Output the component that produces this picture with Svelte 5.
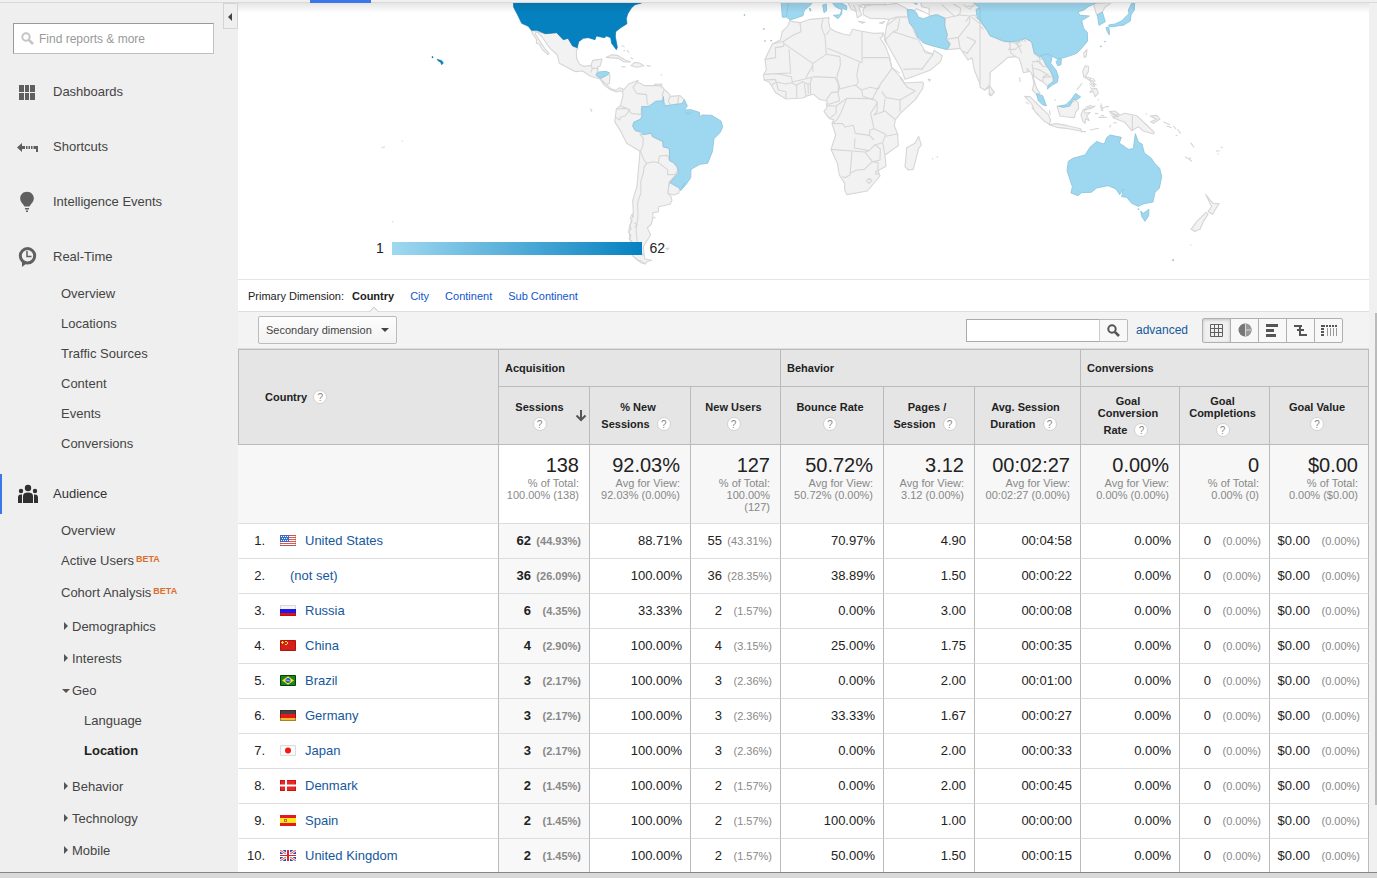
<script>
  const top = [
    { icon: 'dash', label: 'Dashboards' },
    { icon: 'short', label: 'Shortcuts' },
    { icon: 'bulb', label: 'Intelligence Events' },
    { icon: 'clock', label: 'Real-Time' }
  ];
  const realTime = ['Overview', 'Locations', 'Traffic Sources', 'Content', 'Events', 'Conversions'];
  const tabs = ['Country', 'City', 'Continent', 'Sub Continent'];
  const columns = [
    { lines: ['Sessions', ''], sort: true, total: '138', sub: ['% of Total:', '100.00% (138)'] },
    { lines: ['% New', 'Sessions'], total: '92.03%', sub: ['Avg for View:', '92.03% (0.00%)'] },
    { lines: ['New Users', ''], total: '127', sub: ['% of Total:', '100.00%', '(127)'] },
    { lines: ['Bounce Rate', ''], total: '50.72%', sub: ['Avg for View:', '50.72% (0.00%)'] },
    { lines: ['Pages /', 'Session'], total: '3.12', sub: ['Avg for View:', '3.12 (0.00%)'] },
    { lines: ['Avg. Session', 'Duration'], total: '00:02:27', sub: ['Avg for View:', '00:02:27 (0.00%)'] },
    { lines: ['Goal', 'Conversion', 'Rate'], total: '0.00%', sub: ['Avg for View:', '0.00% (0.00%)'] },
    { lines: ['Goal', 'Completions', ''], total: '0', sub: ['% of Total:', '0.00% (0)'] },
    { lines: ['Goal Value', ''], total: '$0.00', sub: ['% of Total:', '0.00% ($0.00)'] }
  ];
  const rows = [
    ['us', 'United States', '62', '44.93%', '88.71%', '55', '43.31%', '70.97%', '4.90', '00:04:58'],
    ['', '(not set)', '36', '26.09%', '100.00%', '36', '28.35%', '38.89%', '1.50', '00:00:22'],
    ['ru', 'Russia', '6', '4.35%', '33.33%', '2', '1.57%', '0.00%', '3.00', '00:00:08'],
    ['cn', 'China', '4', '2.90%', '100.00%', '4', '3.15%', '25.00%', '1.75', '00:00:35'],
    ['br', 'Brazil', '3', '2.17%', '100.00%', '3', '2.36%', '0.00%', '2.00', '00:01:00'],
    ['de', 'Germany', '3', '2.17%', '100.00%', '3', '2.36%', '33.33%', '1.67', '00:00:27'],
    ['jp', 'Japan', '3', '2.17%', '100.00%', '3', '2.36%', '0.00%', '2.00', '00:00:33'],
    ['dk', 'Denmark', '2', '1.45%', '100.00%', '2', '1.57%', '0.00%', '2.00', '00:00:45'],
    ['es', 'Spain', '2', '1.45%', '100.00%', '2', '1.57%', '100.00%', '1.00', '00:00:00'],
    ['gb', 'United Kingdom', '2', '1.45%', '100.00%', '2', '1.57%', '50.00%', '1.50', '00:00:15']
  ];

  // Land outlines, three drawing units to one pixel of the map.
  const americas = {
    land: [
      'M484 91L526 101 560 98 580 119 594 115 608 138 624 145 619 150 620 176 629 193 641 199 663 196 668 181 696 177 690 199 683 201 684 211 678 225 690 236 709 253 722 266 738 271 748 263 758 266 759 276 750 272 739 276 720 268 703 256 690 237 660 228 638 213 616 215 568 190 562 165 540 145 516 111 500 94 496 102 510 124 524 145 537 160 534 164 518 150 507 132 499 130 500 119 488 102Z',
      'M690 236L717 223 720 227 718 251 709 253Z',
      'M763 267L776 252 805 241 800 247 810 250 824 257 873 257 883 268 896 280 901 289 930 287 943 299 937 311 910 314 890 318 877 303 857 304 836 320 815 320 816 350 811 358 790 370 789 380 797 392 810 396 811 404 845 400 847 410 878 425 880 441 898 445 899 480 911 489 922 502 923 518 897 547 894 578 903 590 906 601 900 613 866 620 865 636 848 638 849 651 844 672 832 684 842 704 820 740 822 760 824 776 845 781 830 785 826 792 812 788 788 768 781 724 777 690 790 640 788 602 801 558 806 500 810 454 770 430 753 395 734 365 736 352 739 327 751 317 759 287 758 270Z',
      'M709 172L726 164 744 167 764 179 782 186 762 186 744 175Z',
      'M783 197L794 187 808 189 822 197 800 202Z',
      'M899 548L929 565 926 580 911 585 893 580Z'
    ],
    lines: [
      'M751 317L780 330 776 332 785 340 813 344 815 320M739 327L770 325 778 332 765 348 752 351 750 360 736 352',
      'M800 247L789 262 800 280 830 284 831 305 836 320M883 268L877 285 881 295M901 289L895 302 901 315M926 290L923 312',
      'M811 404L820 415 818 440 811 454 822 480 830 490M830 490L850 485 865 488 868 468 893 466 898 480M865 488L893 509 893 524 915 523 922 514',
      'M830 490L822 502 820 520 812 545 813 578 803 607 804 650 798 690 801 720 809 745 820 768M663 196L667 205 662 218M668 205L683 205 684 211',
      'M755 137L764 140M770 150L777 158M782 172L789 178M760 153L765 151M830 197L842 199M755 200L767 201M852 253L875 252 874 262M660 326L666 331 662 335M35 443L45 440M95 422l4 2M66 664l4 3M886 746L897 744 890 751M786 645L792 650M848 655L857 652',
      'M788 640l-7 14 5 10-8 14 6 8-9 10 8 10-6 10 10 10M792 668l10 6-8 8M793 772l10 8 12 4 10 8M872 224l5 1'
    ],
    light: [
      'M678 225L685 216 708 214 719 219 706 228 692 235Z',
      'M815 320L836 320 857 304 877 303 880 290 883 318 910 314 937 311 943 299 952 318 943 330 962 329 988 337 990 350 997 345 1025 346 1053 363 1058 380 1051 397 1032 416 1027 455 1013 490 990 493 963 508 962 533 947 555 932 572 929 564 900 547 926 518 922 502 911 487 899 483 898 445 880 441 878 424 847 409 844 399 820 404 810 394 796 392 788 378 792 366 811 358 816 350Z',
      'M945 338l12 4 8-6M945 548l-10 16'
    ],
    dark: [
      'M430 0L431 22 443 45 455 70 475 79 484 91 501 91 526 101 560 98 580 119 594 115 608 138 622 143 626 125 640 115 655 113 675 119 679 108 703 113 710 108 722 113 725 130 739 149 742 142 736 110 737 95 751 84 771 71 769 56 773 42 784 24 795 14 815 9 820 0Z',
      'M202 178L208 180 215 182 220 189 215 194 212 187 204 182ZM186 170h3v3h-3Z'
    ]
  };
  const africa = {
    land: [
      'M149 61L157 65 180 68 210 58 267 53 266 65 270 85 285 94 308 102 330 106 337 88 366 94 400 100 430 99 427 111 420 114 435 136 449 172 455 202 473 222 488 238 492 249 545 246 551 250 547 267 526 299 484 337 466 359 463 378 473 402 475 437 435 465 438 499 414 512 420 528 382 573 321 584 314 570 314 550 298 525 292 490 273 448 287 405 276 370 281 359 268 356 252 334 260 324 261 303 238 298 221 283 202 287 189 294 138 297 107 278 88 247 73 240 70 225 79 210 75 178 97 132 121 120 127 94 145 77Z',
      'M536 409L544 435 536 445 520 508 505 510 495 500 498 470 500 443 525 430Z',
      'M440 77L448 55 475 50 502 51 515 77 530 110 548 141 556 158 579 163 582 151 607 167 602 184 570 211 510 233 495 238 485 210 460 165 440 130 433 119 437 94Z',
      'M369 29L379 17 410 12 440 14 470 10 501 26 503 50 470 51 448 58 430 56 390 55 370 44Z',
      'M320 0L334 28 348 34 352 53 365 45 357 25 365 14 435 14 435 0Z',
      'M540 0L545 20 567 25 568 48 595 44 615 55 616 82 622 108 620 118 631 130 624 149 661 145 684 180 696 173 703 210 724 262 735 270 746 263 751 214 790 184 790 0Z',
      'M747 284L751 261 763 277 753 287Z',
      'M565 237l7 2-4 4ZM355 64l20 3-8 3ZM418 69l16-5-7 7Z'
    ],
    lines: [
      'M180 68L183 95 159 106 131 124 97 132M131 124V139L106 143 107 173 75 178M131 130L218 190 219 215M147 148L152 219 112 221M219 190L259 163 300 170M259 163L255 110 244 80 249 55',
      'M258 105L270 90M366 94V188L300 160 262 145M366 172L448 173M300 170L301 195 290 232M358 188L350 225 355 247 345 258',
      'M73 223L112 221 154 230 157 246 198 236 222 230 286 233 294 250 295 275 274 278 259 300M70 240L105 238 109 246 138 252 154 248 168 256 188 245 202 252 213 250M95 255L109 246 115 270 138 275 138 297M170 252V293M193 252L198 288M204 252L205 283M215 234L211 250 212 284',
      'M218 197L202 225 198 236M290 232L299 260 294 280 299 302 270 312 257 312M260 317L289 318 288 340 268 356M288 318L320 295 398 296 412 268 425 247 456 205M299 267L345 255 365 270 390 262 415 267 425 245M365 270L368 288 400 300',
      'M320 295L303 338 291 359 278 370 308 371 315 381 340 376 346 400 388 406 390 390 402 386 392 340 412 308 400 296M412 308L411 335 402 345 435 333 466 359M435 297L430 334',
      'M425 275L438 293 480 300 526 273 502 262 480 232M480 300L480 335M402 386L437 403 428 428 435 465M437 409L473 402M345 415L343 444 388 452 405 434 428 428M388 406L402 420M273 448L375 456 388 452',
      'M336 455L330 525 315 533 307 529M330 520L350 510 373 508 397 485 375 456M397 485L420 480 421 447 405 434M397 485L414 488 414 512M379 543L388 535 396 541 388 550 379 544M407 513h8v9h-8Z',
      'M440 77L475 50M437 118L460 95 473 89 479 55M460 95L530 118M490 208L547 206 579 163M545 206L548 210M549 150L579 163M448 173L455 202 480 220M430 99L440 130',
      'M503 50L530 26 570 44M605 14L645 50 660 40 662 25 640 12M615 55L660 45 690 48M620 118L655 112 688 70 690 48 710 45M655 112L660 145M695 52L740 86M705 50L742 78M680 110L707 124 680 162M670 14L690 28 700 14M675 20L705 18M340 14L350 35M353 14L370 23M370 12L376 22',
      'M576 475l4 3M591 469l2 4M665 153l20 7M677 65L690 48'
    ],
    light: [
      'M123 0L127 52 139 51 151 60 171 53 189 47 193 31 215 12V0ZM248 15l11-3 1 20-8 6ZM271 0L286 20 306 30 305 43 294 56 280 46 300 44 307 25 320 30 320 18 302 8V0ZM208 25l5 2-2 7ZM506 0L530 14 534 0Z',
      'M145 10L139 51',
      'M502 28L521 30 529 38 536 52 551 56 566 50 588 44 615 55 613 75 622 103 618 118 630 133 621 149 575 137 550 129 533 111 522 84 508 70Z',
      'M708 28L760 10 800 0 790 118 741 92 739 79 712 54ZM12 44h3v2h-3ZM70 86h3v2h-3ZM74 122h2v2h-2ZM92 121h3v2h-3Z'
    ],
    dark: []
  };
  const asia = {
    land: [
      'M0 60L22 92 60 120 110 130 135 115 155 125 163 160 180 175 192 180 200 200 215 216 220 245 205 260 190 247 175 238 158 225 162 240 170 265 180 280 170 283 157 270 162 250 155 220 140 205 145 215 130 218 124 195 117 175 107 170 84 172 55 197 30 218 30 255 14 270 0 262Z',
      'M27 255L42 277 34 287 28 278Z',
      'M134 289L150 290 175 315 205 344 212 360 208 373 193 364 165 335 155 312Z',
      'M207 374L230 371 262 377 302 386 305 394 265 386 230 382Z',
      'M231 318L255 320 278 306 287 300 295 310 296 325 288 335 283 353 262 351 240 348Z',
      'M309 330L318 325 345 318 335 325 314 331 315 340 331 337 320 347 328 362 317 356 315 370 308 362 303 345Z',
      'M316 197L326 200 325 215 316 230 335 235 328 240 311 230 308 213Z',
      'M327 240l12 3 5 15-10-10ZM329 277L340 265 350 266 355 280 345 290 340 275ZM311 160l10-12-2 20-6 5Z',
      'M388 335L405 333 420 345 435 340 470 347 500 375 523 397 520 402 490 393 475 380 455 392 435 367 400 354 410 345Z',
      'M510 348L530 346 540 357 520 370 512 365 530 358Z',
      'M677 583L690 600 700 610 717 611 708 625 698 643 684 635 695 620ZM678 637L684 643 670 665 660 688 645 694 633 688 650 665Z',
      'M340 10L350 45 365 40 375 22 395 8Z',
      'M0 12L28 12 0 25Z'
    ],
    lines: [
      'M30 107L22 92M30 107L75 125 90 125 90 145 84 150M88 125L93 160 107 170M105 128L117 140 125 135M110 125L125 160M112 120l8 10M120 116l8 10M130 116l8 10M0 65l20 20M0 78l10 10M88 148h18l8-8M156 190L162 230M156 185L178 185 190 200 205 198 218 228M160 205L180 210 210 230M190 232L218 230M170 180L190 200M178 168L180 185M188 245L190 230 205 222M208 330l3 15M457 347V392',
      'M137 305l10 8M155 322l6 7M168 338l7 5M119 232l1 15M290 270l16-20M330 390l27-5M303 395l15 0M335 315l-16 6M362 310l6 15M345 340l10 1M355 352h25M362 345l10 3M375 320h12M388 382l5-7M400 370l10-3M497 342h5M550 365l20 10M560 378l15 5M580 377l8 10M592 387l10 14M587 405l5 2M632 428l10 14M615 470l21 14M628 473l5 3M708 453h11M722 443l6-2M712 462h5M640 690l5 6M630 735h4M338 235l8 10M340 250l10 5M225 298v5M392 345h20M395 350h22M355 297v4',
      'M360 318l6 10 8-6M390 338l14 6 14 2M328 250l8 8 8 2M330 262l8 6M362 330l8 2'
    ],
    light: [
      'M-30 0L0 25 0 62 22 92 30 107 70 123 85 125 110 124 135 115 155 125 163 160 180 170 196 173 215 168 234 178 265 169 290 160 305 145 323 123 322 97 311 85 305 62 328 48 300 46 294 36 312 30 325 20 350 8 370 0Z',
      'M181 167L205 161 216 172 212 190 228 210 235 230 232 247 217 255 202 267 205 255 222 243 219 228 206 205 196 192 190 178Z',
      'M228 185l8-10 8 2-1 17-10 3ZM169 281L188 287 199 318 187 314 175 302ZM235 319L258 314 273 299 287 280 302 291 292 298 279 299 270 318 250 322Z',
      'M352 44L367 36 376 65 357 76ZM378 83l8-2 2 10 0 14-6-10ZM386 75L405 72 425 63 440 47 447 42 445 30 455 10H464L463 30 453 45 451 63 430 76 416 77 400 80 388 80ZM374 124h2v2h-2ZM361 138h3v2h-3Z',
      'M265 484L278 475 315 465 330 442 350 424 361 429 373 432 380 413 390 405 424 412 418 429 445 448 460 446 466 401 475 426 486 432 493 459 514 475 524 490 539 505 545 530 538 565 525 577 519 606 492 611 475 619 455 610 440 592 425 590 430 567 419 584 408 567 384 557 350 564 334 577 305 578 294 587 273 579 277 560 261 512Z',
      'M474 626l3 2-2 2ZM482 633L490 640 507 628 506 647 495 664 486 651ZM578 779h3v3h-3Z'
    ],
    dark: []
  };
  const regions = [
    { x: 370, data: americas },
    { x: 740, data: africa },
    { x: 980, data: asia }
  ];
</script>

{#snippet help()}<i class="help">?</i>{/snippet}

{#snippet lens(color)}
  <svg width="13" height="13" viewBox="0 0 13 13" fill="none" stroke={color}><circle cx="5" cy="5" r="3.7" stroke-width="2" /><path d="M7.8 7.8L12 12" stroke-width="2.6" /></svg>
{/snippet}

{#snippet flag(code)}
  <svg class="flag" width="16" height="11" viewBox="0 0 16 11">
    {#if code === 'us'}
      <path fill="#fff" d="M0 0h16v11H0z" /><path stroke="#e2574c" d="M0 .5h16M0 2.5h16M0 4.5h16M0 6.5h16M0 8.5h16M0 10.5h16" />
      <path fill="#2d6fd6" d="M0 0h9v7H0z" /><path stroke="#fff" stroke-dasharray="1 1" d="M1 1.5h7M2 3.5h6M1 5.5h7" />
      <path fill="none" stroke="#8a5a50" stroke-opacity=".35" d="M.5.5h15v10H.5z" />
    {:else if code === 'ru'}
      <path fill="#f6f6f6" d="M0 0h16v4H0z" /><path fill="#1b1bf0" d="M0 4h16v4H0z" /><path fill="#e01313" d="M0 8h16v3H0z" /><path fill="none" stroke="#000" stroke-opacity=".12" d="M.5.5h15v10H.5z" />
    {:else if code === 'cn'}
      <path fill="#d2201c" stroke="#b50f0f" d="M.5.5h15v10H.5z" /><path fill="#ffd92e" d="M2 1h1v1h1v1H3v1H2V3H1V2h1zM5 1h2v1H5zM7 2h1v2H7zM5 4h2v1H5z" />
    {:else if code === 'br'}
      <path fill="#16851b" stroke="#073f08" d="M.5.5h15v10H.5z" /><path fill="#f4e332" d="M8 1.300L14 5.500 8 9.700 2 5.500z" /><circle cx="8" cy="5.500" r="2.500" fill="#2d59c9" /><path stroke="#c8e0ff" stroke-width=".7" d="M6 5l4 1" />
    {:else if code === 'de'}
      <path fill="#4b4340" d="M0 0h16v4H0z" /><path fill="#e51b17" d="M0 4h16v4H0z" /><path fill="#eebd35" d="M0 8h16v3H0z" /><path fill="none" stroke="#000" stroke-opacity=".3" d="M.5.5h15v10H.5z" />
    {:else if code === 'jp'}
      <path fill="#fafafa" stroke="#dcdcdc" d="M.5.5h15v10H.5z" /><circle cx="8" cy="5.500" r="3" fill="#f01818" />
    {:else if code === 'dk'}
      <path fill="#e52828" d="M0 0h16v11H0z" /><path fill="none" stroke="#c81313" d="M.5.5h15v10H.5z" /><path stroke="#fff" stroke-width="2" d="M6 0v11M0 5.500h16" />
    {:else if code === 'es'}
      <path fill="#e01c1c" d="M0 0h16v11H0z" /><path fill="#fde81b" d="M0 3h16v5H0z" /><path fill="#c96b2d" d="M4 4h3v3H4z" /><path fill="#f8d9a0" d="M5 5h1v1H5z" />
    {:else if code === 'gb'}
      <path fill="#2f4fae" d="M0 0h16v11H0z" /><path stroke="#fff" stroke-width="2.600" d="M0 0l16 11M16 0L0 11" /><path stroke="#dd3b3b" stroke-width=".9" d="M0 0l16 11M16 0L0 11" /><path stroke="#fff" stroke-width="4" d="M8 0v11" /><path stroke="#fff" stroke-width="3" d="M0 5.500h16" /><path stroke="#dc2424" stroke-width="2" d="M8 0v11" /><path stroke="#dc2424" d="M0 5.500h16" />
    {/if}
  </svg>
{/snippet}

{#snippet navIcon(name)}
  <svg class="nav-icon" width="24" height="24" viewBox="0 0 24 24" fill="#5f5f5f">
    {#if name === 'dash'}
      <path d="M4 5h5v7H4zM10 5h4v7h-4zM15 5h5v7h-5zM4 13h5v7H4zM10 13h4v7h-4zM15 13h5v7h-5z" />
    {:else if name === 'short'}
      <path d="M2 12.500L7 8v3h3v3H7v3zM11 11h1.500v3H11zM13.500 11H15v3h-1.500zM16 11h1.500v3H16zM18.500 11H23v6h-2v-3h-2.500z" />
    {:else if name === 'bulb'}
      <path d="M12 1.800c4 0 6.800 2.900 6.800 6.700 0 3.400-2.800 5-4.300 8h-5c-1.500-3-4.300-4.600-4.300-8C5.200 4.700 8 1.800 12 1.800zM10 18h4v1.500h-4zM11 20.500h2V22h-2z" />
    {:else if name === 'clock'}
      <circle cx="12.500" cy="10.800" r="7.200" fill="none" stroke="#5f5f5f" stroke-width="3" /><path d="M7 15v7l5-4z" /><path d="M12 6v5.500h4.500" fill="none" stroke="#5f5f5f" stroke-width="1.500" />
    {:else}
      <g fill="#303030"><circle cx="13" cy="6" r="3.200" /><circle cx="6" cy="9" r="2.200" /><circle cx="20" cy="9" r="2.200" /><path d="M8 21v-7c0-2.500 2-3.500 5-3.500s5 1 5 3.500v7zM3 21v-5c0-3 1-3.500 4-3.500V21zM19 21v-8.500c3 0 4 .5 4 3.500v5z" /></g>
    {/if}
  </svg>
{/snippet}

<div class="page">
  <div class="strip"><b></b></div>
  <div class="body">
    <aside>
      <div class="collapse"></div>
      <div class="find">{@render lens('#c4c4c4')}<span>Find reports &amp; more</span></div>
      <nav>
        {#each top as item}
          <div class="main">{@render navIcon(item.icon)}{item.label}</div>
        {/each}
        <div class="group">
          {#each realTime as label}<div class="sub">{label}</div>{/each}
        </div>
        <div class="main current">{@render navIcon('people')}Audience</div>
        <div class="group">
          <div class="sub">Overview</div>
          <div class="sub">Active Users<sup>BETA</sup></div>
          <div class="sub tall">Cohort Analysis<sup>BETA</sup></div>
          <div class="fold"><i></i>Demographics</div>
          <div class="fold"><i></i>Interests</div>
          <div class="fold open"><i></i>Geo</div>
          <div class="deep">
            <div>Language</div>
            <div><b>Location</b></div>
          </div>
          <div class="fold"><i></i>Behavior</div>
          <div class="fold"><i></i>Technology</div>
          <div class="fold"><i></i>Mobile</div>
        </div>
      </nav>
    </aside>

    <main>
      <div class="map">
        <svg width="1131" height="276" viewBox="238 3 1131 276">
          <defs><linearGradient id="scale"><stop offset="0" stop-color="#a0d8f0" /><stop offset="1" stop-color="#0581c0" /></linearGradient></defs>
          {#each regions as r}
            <g transform="translate({r.x} 0) scale(.33333)" stroke-linejoin="round">
              {#each r.data.land as d}<path {d} fill="#f2f2f2" stroke="#d6d6d6" stroke-width="3.300" />{/each}
              {#each r.data.lines as d}<path {d} fill="none" stroke="#d6d6d6" stroke-width="3.300" />{/each}
              {#each r.data.light as d}<path {d} fill="#9ed8f0" stroke="#8bc3da" stroke-width="2.500" />{/each}
              {#each r.data.dark as d}<path {d} fill="#0581c0" stroke="#0574ad" stroke-width="2" />{/each}
            </g>
          {/each}
          <rect x="392" y="242" width="250" height="13" fill="url(#scale)" />
          <text x="376" y="253">1</text><text x="649.500" y="253">62</text>
        </svg>
      </div>
      <div class="tabs">
        <span>Primary Dimension:</span>
        {#each tabs as t, i}<a class:chosen={i === 0}>{t}</a>{/each}
      </div>
      <div class="tools">
        <div class="select">Secondary dimension<i></i></div>
        <div class="search"><div class="field"></div><div class="go">{@render lens('#555')}</div></div>
        <a class="adv">advanced</a>
        <div class="views">
          <span class="on"><svg width="13" height="13" viewBox="0 0 13 13" fill="none" stroke="#606060"><path d="M.5.5h12v12H.5zM4.500 0v13M8.500 0v13M0 4.500h13M0 8.500h13" /></svg></span>
          <span><svg width="14" height="14" viewBox="0 0 14 14"><circle cx="7" cy="7" r="6.500" fill="#777" /><path d="M8 .6A6.500 6.500 0 018 13.400z" fill="#989898" /><path d="M7.500 1v12M7.500 7H13" fill="none" stroke="#d8d8d8" /></svg></span>
          <span><svg width="14" height="14" viewBox="0 0 14 14" fill="#555"><path d="M0 1h12v3H0zM0 6h8v3H0zM0 11h10v3H0z" /></svg></span>
          <span><svg width="14" height="14" viewBox="0 0 14 14" fill="#555"><path d="M0 2h8v2H0zM3 6h7v2H3zM5 11h8v2H5zM5 2h2v11H5z" /></svg></span>
          <span><svg width="16" height="14" viewBox="0 0 16 14" fill="#555"><path d="M0 2h4v2H0zM5 2h2v2H5zM8 2h2v2H8zM11 2h2v2h-2zM14 2h2v2h-2zM0 5h3v2H0zM0 8h3v2H0zM0 11h3v2H0z" /><path fill="#999" d="M6 5h1v8H6zM9 5h1v8H9zM12 5h1v8h-1zM15 5h1v8h-1z" /></svg></span>
        </div>
      </div>

      <div class="table">
        <div class="head">
          <div class="country">Country {@render help()}</div>
          <div class="band a">Acquisition</div>
          <div class="band b">Behavior</div>
          <div class="band c">Conversions</div>
          {#each columns as c}
            <div class="col" class:sorted={c.sort}>
              {#each c.lines as line, i}
                <div class:last={i === c.lines.length - 1}>{line}{#if i === c.lines.length - 1}{' '}{@render help()}{/if}</div>
              {/each}
              {#if c.sort}<svg width="12" height="13" viewBox="0 0 12 13" fill="none" stroke="#555" stroke-width="2"><path d="M6 1v10M1.500 6.500L6 11l4.500-4.500" /></svg>{/if}
            </div>
          {/each}
        </div>
        <div class="row totals">
          <div></div>
          {#each columns as c}
            <div class="total" class:white={c.sort}><strong>{c.total}</strong>{#each c.sub as s}<small>{s}</small>{/each}</div>
          {/each}
        </div>
        {#each rows as r, i}
          <div class="row">
            <div class="place"><span>{i + 1}.</span>{#if r[0]}{@render flag(r[0])}{/if}<a class:bare={!r[0]}>{r[1]}</a></div>
            <div class="key">{r[2]}<small>({r[3]})</small></div>
            <div>{r[4]}</div>
            <div>{r[5]}<small>({r[6]})</small></div>
            <div>{r[7]}</div>
            <div>{r[8]}</div>
            <div>{r[9]}</div>
            <div>0.00%</div>
            <div>0<small>(0.00%)</small></div>
            <div>$0.00<small>(0.00%)</small></div>
          </div>
        {/each}
      </div>
    </main>
    <div class="gutter"><i></i></div>
  </div>
  <footer></footer>
</div>

<style>
  :global(body) { margin: 0; background: #fff; }
  .page { width: 1377px; height: 878px; overflow: hidden; display: flex; flex-direction: column; font: 13px/16px "Liberation Sans", Arial, sans-serif; color: #222; }
  .strip { height: 2px; background: #f0f0f0; border-bottom: 1px solid #d9d9d9; flex: none; }
  .strip b { display: block; width: 61px; height: 3px; margin-left: 310px; background: #3b78e7; }
  .body { display: flex; height: 869px; overflow: hidden; flex: none; }
  footer { height: 5px; flex: none; border-top: 1px solid #858585; background: #d9d9d9; }

  aside { width: 238px; background: #efefef; flex: none; position: relative; color: #444; }
  .collapse { position: absolute; right: 0; top: 0; width: 13px; height: 24px; border: 1px solid #d4d4d4; }
  .collapse::after { content: ''; position: absolute; left: 4px; top: 9px; border: 4px solid transparent; border-right-color: #444; border-left: 0; }
  .find { margin: 20px 0 0 13px; width: 199px; height: 29px; border: 1px solid #c0c0c0; border-top-color: #999; border-left-color: #999; background: #fff; display: flex; align-items: center; font-size: 12px; color: #999; }
  .find :global(svg) { margin: 0 5px 0 7px; }
  nav { padding-top: 18px; }
  .main { height: 40px; margin-bottom: 15px; display: flex; align-items: center; }
  .main:nth-child(4) { margin-bottom: 0; }
  .nav-icon { margin: 0 14px 0 15px; }
  .current { border-left: 2px solid #3b78e7; margin: 15px 0 0; color: #333; }
  .current .nav-icon { margin-left: 13px; }
  .group { padding: 2px 0 0 61px; }
  .sub { height: 30px; line-height: 29px; }
  .tall { height: 32px; line-height: 31px; margin: 1px 0 1px; }
  sup { font-size: 9px; font-weight: 700; color: #dd6b2c; line-height: 0; vertical-align: 3px; margin-left: 2px; }
  .fold { height: 32px; line-height: 31px; display: flex; align-items: center; }
  .fold i { width: 0; margin: 0 4px 0 3px; border: 4px solid transparent; border-left: 4px solid #555; border-right: 0; }
  .fold.open i { margin: 1px 2px 0 1px; border: 4px solid transparent; border-top-color: #555; border-bottom: 0; }
  .deep { padding: 0 0 4px 23px; line-height: 29px; }
  .deep div { height: 30px; }
  .deep b { color: #222; }

  main { width: 1131px; flex: none; }
  .map { height: 276px; border-bottom: 1px solid #e5e5e5; position: relative; }
  .map::after { content: ''; position: absolute; left: 0; right: 0; top: 0; height: 10px; background: linear-gradient(#0000001a, #0000); }
  .map svg { display: block; }
  .map text { font-size: 14px; fill: #222; }
  .tabs { height: 31px; display: flex; align-items: center; padding-left: 10px; font-size: 11px; border-bottom: 1px solid #dedede; }
  .tabs a { color: #15c; margin-left: 16px; position: relative; }
  .tabs .chosen { margin-left: 8px; color: #222; font-weight: 700; }
  .tabs .chosen::after { content: ''; position: absolute; left: 18px; top: 20px; width: 7px; height: 7px; background: #f3f3f3; border: solid #ccc; border-width: 1px 0 0 1px; transform: rotate(45deg); clip-path: polygon(0 0, 100% 0, 0 100%); }
  .tools { height: 36px; background: #f3f3f3; display: flex; align-items: center; border-bottom: 1px solid #ddd; }
  .select { margin-left: 20px; width: 137px; height: 26px; border: 1px solid #bbb; border-radius: 2px; background: linear-gradient(#fdfdfd, #f2f2f2); font-size: 11px; display: flex; align-items: center; text-indent: 7px; color: #444; }
  .select i { margin-left: 9px; border: 4px solid transparent; border-top: 4px solid #444; border-bottom: 0; }
  .search { margin-left: 569px; display: flex; height: 23px; }
  .field { width: 132px; height: 21px; border: 1px solid #aaa; border-right-color: #ccc; background: #fff; }
  .go { width: 27px; height: 21px; border: 1px solid #bbb; border-left: 0; background: #f8f8f8; display: flex; align-items: center; justify-content: center; border-radius: 0 2px 2px 0; }
  .adv { font-size: 12px; color: #15589c; margin: 0 14px 0 8px; width: 52px; }
  .views { display: flex; border: 1px solid #b0b0b0; border-radius: 2px; height: 23px; background: #f8f8f8; }
  .views span { width: 27px; display: flex; align-items: center; justify-content: center; border-left: 1px solid #b0b0b0; }
  .views .on { border-left: 0; background: #f0f0f0; box-shadow: inset 0 1px 3px #0003; }

  .head, .row { display: grid; grid-template-columns: 260px 91px 101px 90px 103px 91px 106px 99px 90px 100px; }
  .head { grid-template-rows: 37px 58px; font-size: 11px; font-weight: 700; background: #e5e5e5; border-top: 1px solid #bbb; }
  .head > div { border-left: 1px solid #bbb; border-bottom: 1px solid #bbb; box-sizing: border-box; }
  .head > div:last-child, .head .c { border-right: 1px solid #bbb; }
  .country { grid-row: 1 / 3; padding-left: 26px; display: flex; align-items: center; }
  .country .help { margin-left: 6px; }
  .band { padding-left: 6px; line-height: 37px; }
  .a { grid-column: 2 / 5; }
  .b { grid-column: 5 / 8; }
  .c { grid-column: 8 / 11; }
  .col { display: flex; flex-direction: column; justify-content: center; text-align: center; padding: 5px 4px 0 0; line-height: 12px; position: relative; white-space: nowrap; }
  .col .last { line-height: 22px; height: 22px; }
  .col.sorted { padding-right: 9px; }
  .col svg { position: absolute; right: 2px; top: 22px; }
  .help { display: inline-block; width: 12px; height: 12px; border: 1px solid #d2d2d2; border-radius: 50%; background: #fff; margin: 0 4px; font: 10px/13px "Liberation Sans", Arial, sans-serif; color: #888; text-align: center; }
  .row { height: 35px; }
  .row > div { border-left: 1px solid #bbb; border-bottom: 1px solid #ddd; box-sizing: border-box; text-align: right; padding: 9px 8px 0 0; white-space: nowrap; }
  .row > div:first-child { border-left-color: transparent; }
  .row > div:last-child { border-right: 1px solid #bbb; }
  .row small { display: inline-block; width: 50px; font-size: 11px; color: #888; }
  .row .key { background: #f8f8f8; font-weight: 700; }
  .row .place { display: flex; align-items: flex-start; padding-right: 0; }
  .place span { width: 26px; }
  .place a { color: #15589c; margin-left: 9px; }
  .place .bare { margin-left: 25px; }
  .flag { margin: 2px 0 0 15px; }
  .row.totals { height: 79px; }
  .row.totals > div { background: #f7f7f7; padding: 8px 10px 0 0; }
  .row.totals > .white { background: #fff; }
  .totals strong { display: block; font-weight: 400; font-size: 20px; line-height: 24px; }
  .row.totals small { display: block; width: auto; line-height: 12px; }

  .gutter { flex: 1; background: #f0f0f0; display: flex; justify-content: flex-end; }
  .gutter i { width: 2px; height: 492px; margin-top: 310px; background: #bbb; }
</style>
